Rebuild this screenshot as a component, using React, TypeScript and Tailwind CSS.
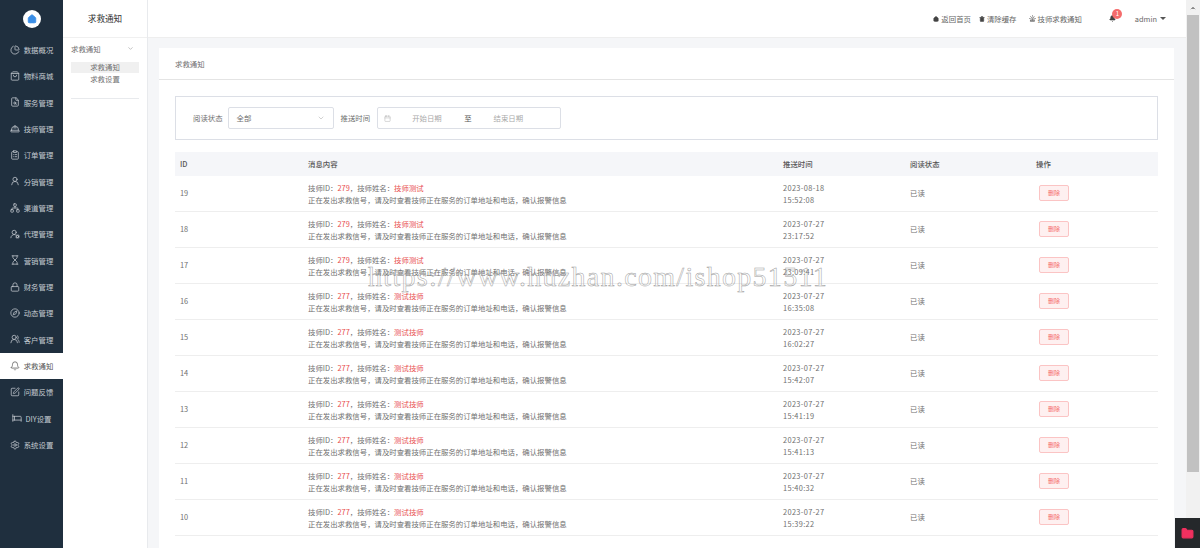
import {
  Bed,
  Bell,
  Calendar,
  ChevronDown,
  ChevronUp,
  ClipboardList,
  Compass,
  FileSearch,
  Folder,
  HardHat,
  Home,
  Lock,
  Network,
  PieChart,
  Settings,
  ShoppingBag,
  Siren,
  SquarePen,
  Trash2,
  UserRound,
  UsersRound,
  UserRoundCog,
  Hourglass,
} from "lucide-react"

const menu = [
  { label: "数据概况", icon: PieChart },
  { label: "物料商城", icon: ShoppingBag },
  { label: "服务管理", icon: FileSearch },
  { label: "技师管理", icon: HardHat },
  { label: "订单管理", icon: ClipboardList },
  { label: "分销管理", icon: UserRound },
  { label: "渠道管理", icon: Network },
  { label: "代理管理", icon: UserRoundCog },
  { label: "营销管理", icon: Hourglass },
  { label: "财务管理", icon: Lock },
  { label: "动态管理", icon: Compass },
  { label: "客户管理", icon: UsersRound },
  { label: "求救通知", icon: Bell, active: true },
  { label: "问题反馈", icon: SquarePen },
  { label: "DIY设置", icon: Bed },
  { label: "系统设置", icon: Settings },
]

const rows = [
  { id: 19, tid: 279, name: "技师测试", date: "2023-08-18", time: "15:52:08" },
  { id: 18, tid: 279, name: "技师测试", date: "2023-07-27", time: "23:17:52" },
  { id: 17, tid: 279, name: "技师测试", date: "2023-07-27", time: "23:09:41" },
  { id: 16, tid: 277, name: "测试技师", date: "2023-07-27", time: "16:35:08" },
  { id: 15, tid: 277, name: "测试技师", date: "2023-07-27", time: "16:02:27" },
  { id: 14, tid: 277, name: "测试技师", date: "2023-07-27", time: "15:42:07" },
  { id: 13, tid: 277, name: "测试技师", date: "2023-07-27", time: "15:41:19" },
  { id: 12, tid: 277, name: "测试技师", date: "2023-07-27", time: "15:41:13" },
  { id: 11, tid: 277, name: "测试技师", date: "2023-07-27", time: "15:40:32" },
  { id: 10, tid: 277, name: "测试技师", date: "2023-07-27", time: "15:39:22" },
]

const cols = "grid grid-cols-[128px_475px_127px_126px_1fr]"

export default function App() {
  return (
    <div className="relative flex h-[548px] w-[1200px] overflow-hidden bg-[#f5f6f8] font-['Noto_Sans_CJK_SC','Noto_Sans',sans-serif] text-[7.4px] text-[#707070]">
      {/* Main dark menu */}
      <aside className="flex w-[63px] shrink-0 flex-col bg-[#1f2f3e]">
        <div className="flex h-[37px] items-center justify-center">
          <div className="flex h-[18px] w-[18px] items-center justify-center rounded-full bg-white">
            <Home className="h-[10px] w-[10px] fill-[#3a8ee6] text-[#3a8ee6]" />
          </div>
        </div>
        {menu.map((m) => (
          <div
            key={m.label}
            className={`flex h-[26.33px] items-center justify-center gap-[4px] pb-[1px] ${m.active ? "bg-white text-[#555]" : "text-[#c5cbd1]"}`}
          >
            <m.icon className="h-[10px] w-[10px]" strokeWidth={1.8} />
            <span>{m.label}</span>
          </div>
        ))}
      </aside>

      {/* Sub menu */}
      <aside className="flex w-[85px] shrink-0 flex-col border-r border-[#e8eaed] bg-white">
        <div className="flex h-[38px] items-center justify-center border-b border-[#f0f0f0] text-[8.6px] text-[#333]">
          求救通知
        </div>
        <div className="px-[8px] pt-[4px]">
          <div className="flex h-[13px] items-center justify-between pr-[5px]">
            <span>求救通知</span>
            <ChevronDown className="h-[7px] w-[7px] text-[#999]" />
          </div>
          <div className="mt-[7px] flex h-[11px] items-center justify-center bg-[#f0f0f0] pb-[1px]">求救通知</div>
          <div className="flex h-[12px] items-center justify-center">求救设置</div>
          <div className="mt-[13px] border-t border-[#e8eaed]" />
        </div>
      </aside>

      <div className="flex min-w-0 flex-1 flex-col">
        {/* Top bar */}
        <header className="flex h-[38px] shrink-0 items-center justify-end border-b border-[#eeeeee] bg-white pr-[20px] text-[#666]">
          <Home className="mr-[2px] h-[6px] w-[6px] fill-[#444] text-[#444]" />
          <span>返回首页</span>
          <Trash2 className="ml-[8px] mr-[2px] h-[6px] w-[6px] fill-[#444] text-[#444]" />
          <span>清除缓存</span>
          <Siren className="ml-[12px] mr-[2px] h-[7px] w-[7px] text-[#444]" />
          <span>技师求救通知</span>
          <div className="relative ml-[27px] mr-[19px]">
            <Bell className="h-[7px] w-[7px] fill-[#444] text-[#444]" />
            <span className="absolute left-[3.5px] top-[-6.5px] flex h-[10px] w-[10px] items-center justify-center rounded-full bg-[#f56c6c] text-[6px] text-white">
              1
            </span>
          </div>
          <span>admin</span>
          <span className="ml-[3px] h-0 w-0 border-x-[3px] border-t-[3px] border-x-transparent border-t-[#555]" />
        </header>

        {/* Card */}
        <main className="ml-[11px] mr-[12px] mt-[10px] flex-1 bg-white">
          <div className="flex h-[32px] items-center border-b border-[#e4e4e4] pl-[16px]">求救通知</div>
          <div className="px-[16px] pt-[16px]">
            {/* Filter box */}
            <div className="flex h-[44px] items-center border border-[#dcdfe6] pl-[17px]">
              <span>阅读状态</span>
              <div className="ml-[5px] flex h-[22px] w-[106px] items-center justify-between rounded-[2px] border border-[#dcdfe6] px-[8px]">
                <span>全部</span>
                <ChevronDown className="h-[8px] w-[8px] text-[#bbb]" />
              </div>
              <span className="ml-[7px]">推送时间</span>
              <div className="ml-[7px] flex h-[22px] w-[184px] items-center rounded-[2px] border border-[#dcdfe6] pl-[6px]">
                <Calendar className="h-[7px] w-[7px] text-[#bbb]" />
                <span className="ml-[21px] w-[30px] text-[#aaa]">开始日期</span>
                <span className="ml-[22px] text-[#555]">至</span>
                <span className="ml-[22px] text-[#aaa]">结束日期</span>
              </div>
            </div>

            {/* Table */}
            <div className="mt-[12px]">
              <div className={`${cols} h-[24px] items-center bg-[#f5f6f9] font-medium text-[#555]`}>
                <span className="pl-[5px]">ID</span>
                <span className="pl-[5px]">消息内容</span>
                <span className="pl-[5px]">推送时间</span>
                <span className="pl-[5px]">阅读状态</span>
                <span className="pl-[5px]">操作</span>
              </div>
              {rows.map((r) => (
                <div key={r.id} className={`${cols} h-[36px] items-center border-b border-[#eeeeee] leading-[11.5px]`}>
                  <span className="pb-[2px] pl-[5px]">{r.id}</span>
                  <div className="pl-[5px]">
                    <div>
                      技师ID：<span className="text-[#e8504f]">{r.tid}</span>，技师姓名：
                      <span className="text-[#e8504f]">{r.name}</span>
                    </div>
                    <div>正在发出求救信号，请及时查看技师正在服务的订单地址和电话，确认报警信息</div>
                  </div>
                  <div className="pl-[5px] tracking-[0.35px]">
                    <div>{r.date}</div>
                    <div>{r.time}</div>
                  </div>
                  <span className="pb-[2px] pl-[5px]">已读</span>
                  <div className="pb-[2px] pl-[8px]">
                    <button className="flex h-[16px] w-[30px] items-center justify-center rounded-[2px] border border-[#fbc4c4] bg-[#fef0f0] text-[6px] text-[#f56c6c]">
                      删除
                    </button>
                  </div>
                </div>
              ))}
            </div>
          </div>
        </main>
      </div>

      {/* Browser scrollbar */}
      <div className="flex w-[14px] shrink-0 flex-col items-center bg-[#f1f1f1]">
        <ChevronUp className="mt-[4px] h-[8px] w-[8px] fill-[#888] text-[#888]" />
        <div className="mt-[3px] h-[457px] w-[12px] bg-[#c1c1c1]" />
      </div>

      {/* Watermark */}
      <div className="pointer-events-none absolute left-[368px] top-[259px] font-['Liberation_Serif',serif] text-[28px] leading-[36px] tracking-[1.3px] text-transparent [-webkit-text-stroke:0.5px_#a0a0a0]">
        https://www.huzhan.com/ishop51511
      </div>

      {/* Floating folder widget */}
      <div className="absolute bottom-0 right-0 flex h-[30px] w-[25px] items-center justify-center bg-[#25282b]">
        <Folder className="h-[13px] w-[13px] fill-[#f0305f] text-[#f0305f]" />
      </div>
    </div>
  )
}
